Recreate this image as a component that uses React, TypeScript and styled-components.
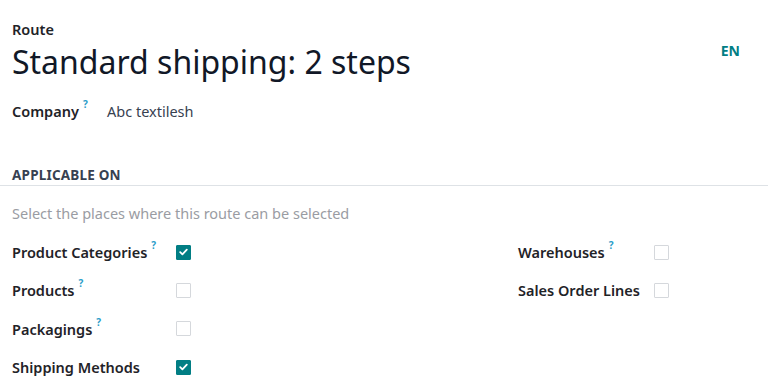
import React from "react";
import styled, { createGlobalStyle } from "styled-components";

const Global = createGlobalStyle`
  html, body { margin: 0; padding: 0; background: #fff; }
  body { font-family: "Noto Sans", "Open Sans", sans-serif; color: #1f2328; }
  * { box-sizing: border-box; }
`;

const Sheet = styled.div`
  width: 768px;
  height: 391px;
  overflow: hidden;
  background: #fff;
  padding-top: 19px;
`;

const TitleArea = styled.div`
  display: flex;
  justify-content: space-between;
  align-items: flex-start;
  padding: 0 28px 0 12px;
`;

const TitleBlock = styled.div`
  display: flex;
  flex-direction: column;
`;

const Kicker = styled.div`
  font-size: 14.5px;
  font-weight: 600;
  line-height: 20px;
  color: #1f2328;
`;

const Title = styled.h1`
  margin: 1px 0 0;
  font-size: 32px;
  font-weight: 400;
  line-height: 44px;
  color: #111827;
`;

const Lang = styled.span`
  margin-top: 22px;
  font-size: 14px;
  font-weight: 700;
  color: #017e84;
`;

const FieldRow = styled.div`
  display: flex;
  align-items: center;
  padding: 0 12px;
  margin-top: 15px;
  height: 24px;
`;

const Label = styled.span<{ $w?: number }>`
  display: inline-flex;
  align-items: flex-start;
  width: ${(p) => (p.$w ? `${p.$w}px` : "auto")};
  flex-shrink: 0;
  font-size: 14.5px;
  font-weight: 600;
  color: #1f2328;
`;

const Help = styled.sup`
  font-size: 10px;
  font-weight: 700;
  color: #2b9dc9;
  margin-left: 4px;
  line-height: 1;
  position: relative;
  top: -2px;
`;

const Value = styled.span`
  font-size: 14.5px;
  color: #374151;
`;

const SectionHead = styled.div`
  margin-top: 43px;
  padding: 0 12px 1px;
  border-bottom: 1px solid #dee2e6;
  font-size: 13.5px;
  font-weight: 700;
  letter-spacing: 0.2px;
  color: #374151;
  line-height: 18px;
`;

const Hint = styled.div`
  padding: 0 12px;
  margin-top: 17px;
  font-size: 14.5px;
  color: #9a9ca3;
  line-height: 20px;
`;

const Columns = styled.div`
  display: grid;
  grid-template-columns: 506px 1fr;
  padding-left: 12px;
  margin-top: 10px;
`;

const Col = styled.div`
  display: flex;
  flex-direction: column;
`;

const Row = styled.div`
  display: flex;
  align-items: center;
  height: 38.3px;
`;

const Box = styled.span<{ $on?: boolean }>`
  width: 15px;
  height: 15px;
  border-radius: 1px;
  display: inline-flex;
  align-items: center;
  justify-content: center;
  background: ${(p) => (p.$on ? "#017e84" : "#fff")};
  border: 1px solid ${(p) => (p.$on ? "#017e84" : "#d5d8dc")};
`;

const Check = () => (
  <svg width="9" height="8" viewBox="0 0 9 8">
    <path d="M1.2 4.2 L3.4 6.3 L7.8 1.6" fill="none" stroke="#fff" strokeWidth="1.8" strokeLinecap="round" strokeLinejoin="round" />
  </svg>
);

type Item = { label: string; help?: boolean; on?: boolean };

const left: Item[] = [
  { label: "Product Categories", help: true, on: true },
  { label: "Products", help: true },
  { label: "Packagings", help: true },
  { label: "Shipping Methods", on: true },
];
const right: Item[] = [
  { label: "Warehouses", help: true },
  { label: "Sales Order Lines" },
];

const Group = ({ items, w }: { items: Item[]; w: number }) => (
  <Col>
    {items.map((it) => (
      <Row key={it.label}>
        <Label $w={w}>
          {it.label}
          {it.help && <Help>?</Help>}
        </Label>
        <Box $on={it.on}>{it.on && <Check />}</Box>
      </Row>
    ))}
  </Col>
);

export default function App() {
  return (
    <Sheet>
      <Global />
      <TitleArea>
        <TitleBlock>
          <Kicker>Route</Kicker>
          <Title>Standard shipping: 2 steps</Title>
        </TitleBlock>
        <Lang>EN</Lang>
      </TitleArea>
      <FieldRow>
        <Label $w={95}>
          Company<Help>?</Help>
        </Label>
        <Value>Abc textilesh</Value>
      </FieldRow>
      <SectionHead>APPLICABLE ON</SectionHead>
      <Hint>Select the places where this route can be selected</Hint>
      <Columns>
        <Group items={left} w={164} />
        <Group items={right} w={136} />
      </Columns>
    </Sheet>
  );
}
